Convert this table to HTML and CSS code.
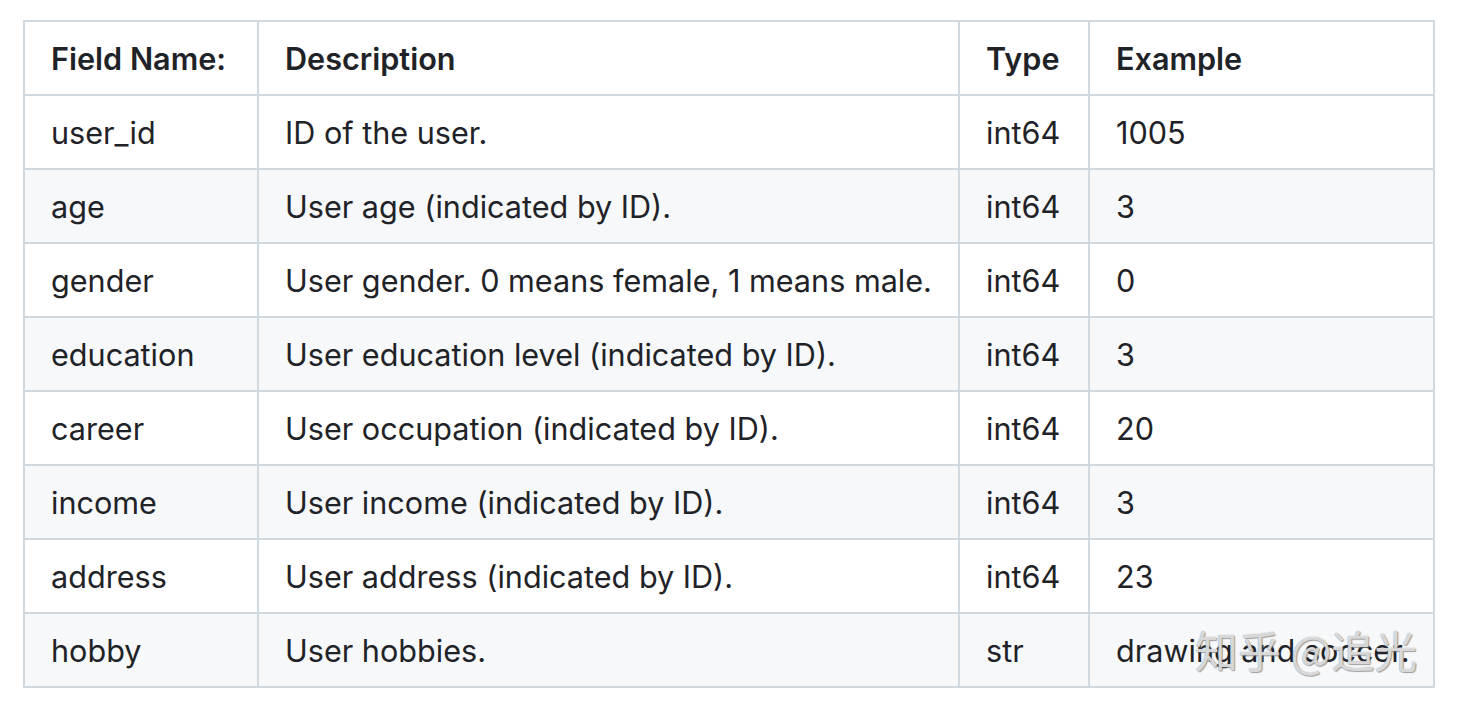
FILE: index.html
```html
<!DOCTYPE html>
<html>
<head>
<meta charset="utf-8">
<link rel="stylesheet" href="styles.css">
</head>
<body>
<div class="page">
  <table class="fields">
    <colgroup>
      <col class="c-name">
      <col class="c-desc">
      <col class="c-type">
      <col class="c-ex">
    </colgroup>
    <thead>
      <tr><th>Field Name:</th><th>Description</th><th>Type</th><th>Example</th></tr>
    </thead>
    <tbody>
      <tr><td>user_id</td><td>ID of the user.</td><td>int64</td><td>1005</td></tr>
      <tr><td>age</td><td>User age (indicated by ID).</td><td>int64</td><td>3</td></tr>
      <tr><td>gender</td><td>User gender. 0 means female, 1 means male.</td><td>int64</td><td>0</td></tr>
      <tr><td>education</td><td>User education level (indicated by ID).</td><td>int64</td><td>3</td></tr>
      <tr><td>career</td><td>User occupation (indicated by ID).</td><td>int64</td><td>20</td></tr>
      <tr><td>income</td><td>User income (indicated by ID).</td><td>int64</td><td>3</td></tr>
      <tr><td>address</td><td>User address (indicated by ID).</td><td>int64</td><td>23</td></tr>
      <tr><td>hobby</td><td>User hobbies.</td><td>str</td><td>drawing and soccer.</td></tr>
    </tbody>
  </table>
  <div class="watermark">知乎 @追光</div>
</div>
</body>
</html>
```
FILE: styles.css
```css
html, body {
  margin: 0;
  padding: 0;
  background: #ffffff;
}
.page {
  position: relative;
  padding: 20px 0 0 23px;
  font-family: Inter, "Noto Sans", sans-serif;
  color: #1f2328;
}
.fields {
  border-collapse: collapse;
  table-layout: fixed;
  width: 1410px;
  font-size: 30.6px;
}
.c-name { width: 234px; }
.c-desc { width: 701px; }
.c-type { width: 130px; }
.c-ex { width: 345px; }
.fields th,
.fields td {
  border: 2px solid #d1d9e0;
  padding: 13px 26px 11px 26px;
  height: 48px;
  line-height: 48px;
  text-align: left;
  white-space: nowrap;
  overflow: hidden;
  box-sizing: content-box;
}
.fields th {
  font-weight: 600;
}
.fields tbody tr:nth-child(even) {
  background: #f6f8fa;
}
.watermark {
  position: absolute;
  left: 1195px;
  top: 623px;
  font-family: "Noto Sans CJK SC", sans-serif;
  font-size: 43px;
  line-height: 52px;
  color: rgba(255, 255, 255, 0.72);
  text-shadow: 0 0 1px rgba(110,110,110,0.9), 1px 1px 1px rgba(110,110,110,0.6);
  white-space: nowrap;
}
```
